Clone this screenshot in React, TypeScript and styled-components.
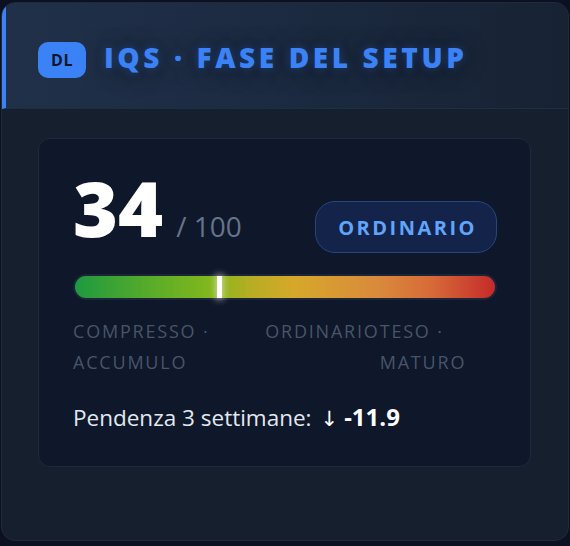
import React from "react";
import styled, { createGlobalStyle } from "styled-components";

const Global = createGlobalStyle`
  html, body { margin: 0; padding: 0; background: #0b1120; }
  body { padding: 2px 1px 0 1px; font-family: "Open Sans", "Noto Sans", sans-serif; }
  * { box-sizing: border-box; }
`;

const Card = styled.section`
  width: 568px;
  height: 539px;
  background: #161f2e;
  border: 1px solid #1f2b3c;
  border-radius: 14px;
  overflow: hidden;
  display: flex;
  flex-direction: column;
`;

const Header = styled.header`
  display: flex;
  align-items: flex-start;
  gap: 18px;
  padding: 39px 0 30px 32px;
  border-left: 4px solid #3b82f6;
  border-bottom: 1px solid #1f2d42;
  background: linear-gradient(90deg, #203049 0%, #1c2b42 45%, #172233 100%);
`;

const Badge = styled.div`
  width: 48px;
  height: 36px;
  border-radius: 10px;
  background: #3b82f6;
  color: #0f172a;
  font-weight: 700;
  font-size: 16px;
  letter-spacing: 0.5px;
  display: flex;
  align-items: center;
  justify-content: center;
`;

const Title = styled.h1`
  margin: 0;
  font-size: 28px;
  line-height: 30px;
  font-weight: 800;
  letter-spacing: 3.6px;
  color: #3b82f6;
  text-shadow: 0 0 10px rgba(59, 130, 246, 0.35), 0 2px 22px rgba(5, 10, 20, 0.7);
`;

const Body = styled.div`
  padding: 29px 37px 0 36px;
`;

const Panel = styled.div`
  background: #0f172a;
  border: 1px solid #1e293b;
  border-radius: 12px;
  padding: 30px 33px 30px 34px;
`;

const ScoreRow = styled.div`
  display: flex;
  justify-content: space-between;
  align-items: flex-start;
`;

const ScoreGroup = styled.div`
  display: flex;
  align-items: baseline;
`;

const Score = styled.span`
  font-size: 77px;
  line-height: 1;
  font-weight: 800;
  color: #ffffff;
`;

const Max = styled.span`
  margin-left: 13px;
  font-size: 28px;
  color: #64748b;
`;

const Pill = styled.span`
  margin-top: 32px;
  display: inline-flex;
  align-items: center;
  height: 52px;
  padding: 0 19px 0 22px;
  border-radius: 20px;
  border: 1px solid #28467e;
  background: #13234a;
  color: #60a5fa;
  font-size: 20px;
  font-weight: 700;
  letter-spacing: 2.5px;
`;

const Bar = styled.div`
  position: relative;
  margin-top: 21px;
  height: 26px;
  border-radius: 13px;
  border: 2px solid #1b2537;
  background: linear-gradient(
    90deg,
    #1e9940 0%,
    #5fae27 20%,
    #84b81c 33%,
    #b8ad24 42%,
    #d6a82a 52%,
    #d98a3c 72%,
    #d76a38 85%,
    #c42a2a 100%
  );
`;

const Marker = styled.span`
  position: absolute;
  top: 0;
  bottom: 0;
  width: 5px;
  margin-left: -1px;
  background: #ffffff;
  box-shadow: 0 0 6px 2px rgba(255, 255, 255, 0.45);
`;

const Labels = styled.div`
  margin-top: 16px;
  display: flex;
  justify-content: space-between;
  font-size: 18px;
  line-height: 30.6px;
  letter-spacing: 1.8px;
  color: #475569;
`;

const Label = styled.span``;

const Slope = styled.div`
  margin-top: 23px;
  font-size: 22.5px;
  line-height: 33px;
  color: #e2e8f0;
`;

const SlopeValue = styled.span`
  margin-left: 9px;
  color: #ffffff;
  font-weight: 700;
  font-size: 24px;
`;

const Arrow = styled.span`
  font-weight: 400;
  font-family: "DejaVu Sans", sans-serif;
  font-size: 21px;
  margin-right: 6px;
`;

export default function App() {
  const score = 34;
  return (
    <>
      <Global />
      <Card>
        <Header>
          <Badge>DL</Badge>
          <Title>IQS · FASE DEL SETUP</Title>
        </Header>
        <Body>
          <Panel>
            <ScoreRow>
              <ScoreGroup>
                <Score>{score}</Score>
                <Max>/ 100</Max>
              </ScoreGroup>
              <Pill>ORDINARIO</Pill>
            </ScoreRow>
            <Bar>
              <Marker style={{ left: `${score}%` }} />
            </Bar>
            <Labels>
              <Label>COMPRESSO · ACCUMULO</Label>
              <Label>ORDINARIO</Label>
              <Label>TESO · MATURO</Label>
            </Labels>
            <Slope>
              Pendenza 3 settimane:
              <SlopeValue>
                <Arrow>↓</Arrow>-11.9
              </SlopeValue>
            </Slope>
          </Panel>
        </Body>
      </Card>
    </>
  );
}
